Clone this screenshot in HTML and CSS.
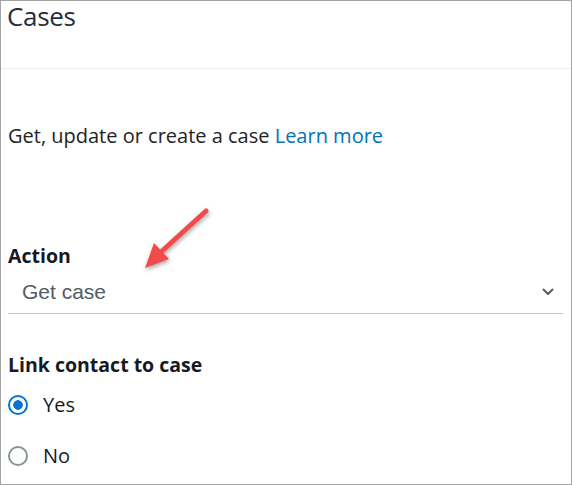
FILE: index.html
```html
<!DOCTYPE html>
<html>
<head>
<meta charset="utf-8">
<link rel="stylesheet" href="styles.css">
</head>
<body>
<div class="frame">
  <div class="header"><h2 class="title">Cases</h2></div>
  <div class="content">
    <p class="desc">Get, update or create a case <a class="link" href="#">Learn more</a></p>
    <div class="field">
      <div class="label">Action</div>
      <div class="select">
        <span class="select-value">Get case</span>
        <svg class="chevron" width="12" height="8" viewBox="0 0 12 8"><path d="M1.5 1.5 L6 6 L10.5 1.5" fill="none" stroke="#545b64" stroke-width="2" stroke-linecap="round" stroke-linejoin="round"/></svg>
      </div>
    </div>
    <div class="field field-radio">
      <div class="label">Link contact to case</div>
      <div class="radio-row radio-first">
        <span class="radio radio-on"></span><span class="radio-text">Yes</span>
      </div>
      <div class="radio-row">
        <span class="radio"></span><span class="radio-text">No</span>
      </div>
    </div>
  </div>
  <svg class="arrow" width="90" height="80" viewBox="0 0 90 80">
    <defs>
      <filter id="sh" x="-30%" y="-30%" width="160%" height="160%">
        <feDropShadow dx="1" dy="2" stdDeviation="2" flood-color="#000" flood-opacity="0.35"/>
      </filter>
    </defs>
    <g filter="url(#sh)">
      <line x1="73" y1="12" x2="28" y2="53" stroke="#f24b4b" stroke-width="5" stroke-linecap="round"/>
      <polygon points="12,69 21,44 36,60" fill="#f24b4b"/>
    </g>
  </svg>
</div>
</body>
</html>
```

FILE: styles.css
```css
html, body {
  margin: 0;
  padding: 0;
  background: #fff;
}
.frame {
  position: relative;
  width: 572px;
  height: 485px;
  box-sizing: border-box;
  border: 1px solid #a3a3a3;
  overflow: hidden;
  font-family: "Open Sans", "Noto Sans", sans-serif;
  color: #16191f;
}
.header {
  height: 67px;
  border-bottom: 1px solid #e9ebed;
}
.title {
  margin: 0;
  padding: 0 0 0 6px;
  font-weight: 400;
  font-size: 26px;
  line-height: 30px;
  color: #232f3e;
  letter-spacing: -0.3px;
}
.content {
  padding: 0 0 0 7px;
}
.desc {
  margin: 0;
  padding-top: 53px;
  font-size: 20px;
  line-height: 28px;
  color: #232323;
}
.link {
  color: #0073bb;
  text-decoration: none;
}
.field {
  padding-top: 93px;
}
.label {
  font-weight: 700;
  font-size: 19.5px;
  line-height: 26px;
  color: #16191f;
}
.select {
  display: flex;
  align-items: center;
  justify-content: space-between;
  width: 555px;
  height: 45px;
  box-sizing: border-box;
  border-bottom: 1px solid #c6c6c6;
  padding: 2px 9px 0 14px;
}
.select-value {
  font-family: "Liberation Sans", Arial, sans-serif;
  font-size: 21px;
  color: #545b64;
}
.field-radio {
  padding-top: 38px;
}
.radio-row {
  display: flex;
  align-items: center;
  height: 51px;
}
.radio-first {
  margin-top: 1px;
}
.radio {
  width: 20px;
  height: 20px;
  box-sizing: border-box;
  border-radius: 50%;
  border: 2px solid #879596;
  margin-right: 15px;
  flex: none;
}
.radio-on {
  border: 2.5px solid #0972d3;
  background: radial-gradient(circle, #0972d3 0, #0972d3 4.5px, #fff 5px);
}
.radio-text {
  font-size: 20px;
  color: #16191f;
}
.arrow {
  position: absolute;
  left: 132px;
  top: 198px;
}
```
